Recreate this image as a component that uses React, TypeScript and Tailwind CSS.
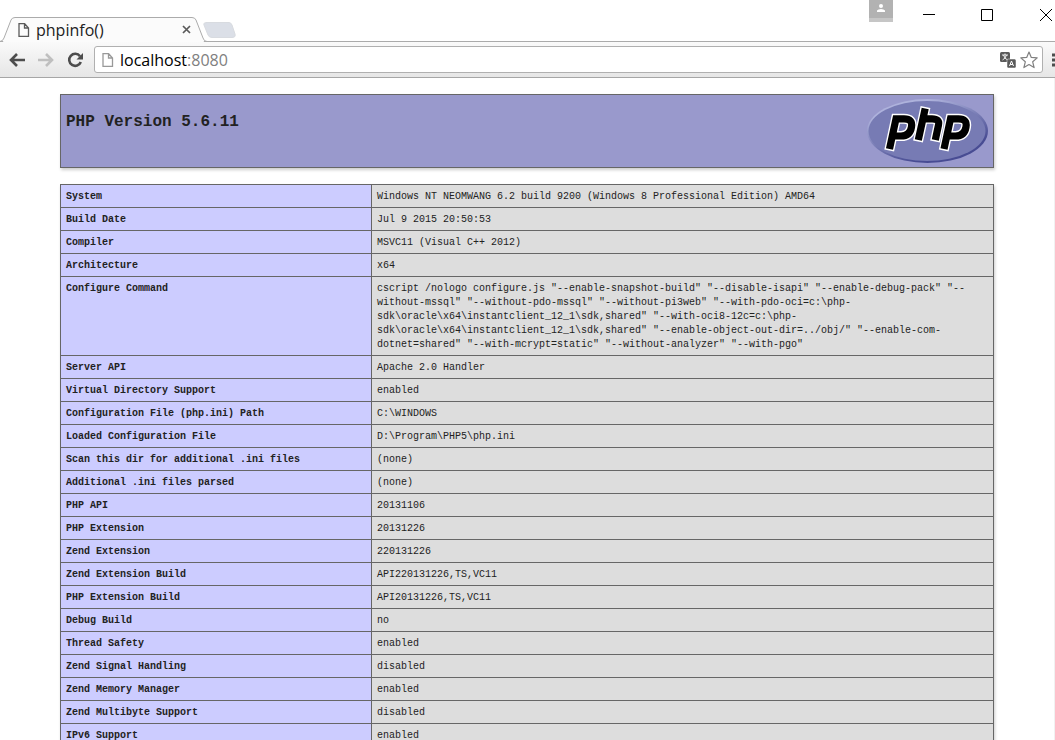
import type { ReactNode } from 'react';

const rows: [string, ReactNode][] = [
  ['System', 'Windows NT NEOMWANG 6.2 build 9200 (Windows 8 Professional Edition) AMD64'],
  ['Build Date', 'Jul 9 2015 20:50:53'],
  ['Compiler', 'MSVC11 (Visual C++ 2012)'],
  ['Architecture', 'x64'],
  [
    'Configure Command',
    <>
      cscript /nologo configure.js "--enable-snapshot-build" "--disable-isapi" "--enable-debug-pack" "--<br />
      without-mssql" "--without-pdo-mssql" "--without-pi3web" "--with-pdo-oci=c:\php-<br />
      sdk\oracle\x64\instantclient_12_1\sdk,shared" "--with-oci8-12c=c:\php-<br />
      sdk\oracle\x64\instantclient_12_1\sdk,shared" "--enable-object-out-dir=../obj/" "--enable-com-<br />
      dotnet=shared" "--with-mcrypt=static" "--without-analyzer" "--with-pgo"
    </>,
  ],
  ['Server API', 'Apache 2.0 Handler'],
  ['Virtual Directory Support', 'enabled'],
  ['Configuration File (php.ini) Path', 'C:\\WINDOWS'],
  ['Loaded Configuration File', 'D:\\Program\\PHP5\\php.ini'],
  ['Scan this dir for additional .ini files', '(none)'],
  ['Additional .ini files parsed', '(none)'],
  ['PHP API', '20131106'],
  ['PHP Extension', '20131226'],
  ['Zend Extension', '220131226'],
  ['Zend Extension Build', 'API220131226,TS,VC11'],
  ['PHP Extension Build', 'API20131226,TS,VC11'],
  ['Debug Build', 'no'],
  ['Thread Safety', 'enabled'],
  ['Zend Signal Handling', 'disabled'],
  ['Zend Memory Manager', 'enabled'],
  ['Zend Multibyte Support', 'disabled'],
  ['IPv6 Support', 'enabled'],
];

function PageIcon({ className }: { className: string }) {
  return (
    <svg viewBox="0 0 12 14" className={`h-[14px] w-3 shrink-0 ${className}`} fill="none" stroke="currentColor">
      <path d="M1 .5h5.5L10.5 5v8.5H1z M6.5.5V5h4" strokeWidth="1.3" />
    </svg>
  );
}

function PhpLogo() {
  return (
    <svg viewBox="0 0 122 70" className="h-[70px] w-[122px] shrink-0" role="img" aria-label="PHP logo">
      <defs>
        <linearGradient id="rim" x1="0.2" y1="0" x2="0.8" y2="1">
          <stop offset="0.15" stopColor="#aeb2dc" />
          <stop offset="0.5" stopColor="#777bb4" />
          <stop offset="0.8" stopColor="#484c93" />
        </linearGradient>
      </defs>
      <ellipse cx="60.5" cy="36" rx="60.5" ry="32" fill="url(#rim)" />
      <ellipse cx="60" cy="36" rx="58.5" ry="30" fill="#777bb4" />
      <g fill="none">
        <g stroke="#fff" strokeWidth="10">
          <path d="M22.2 55.5 L29 23.8 H37 Q46 23.8 44.5 32 Q43 41 34 41 H26" />
          <path d="M51 46.5 L58.5 12 M56 23.8 H65 Q73 23.8 71.500 30 L68 46.5" />
          <path d="M76.7 55.5 L83.5 23.8 H91.5 Q100.500 23.8 99 32 Q97.500 41 88.500 41 H80" />
        </g>
        <g stroke="#000" strokeWidth="7.2">
          <path d="M22.5 54 L29 23.8 H37 Q46 23.8 44.5 32 Q43 41 34 41 H26" />
          <path d="M51.3 45 L58.200 13.5 M56 23.8 H65 Q73 23.8 71.500 30 L68.300 45" />
          <path d="M77 54 L83.5 23.8 H91.5 Q100.500 23.8 99 32 Q97.500 41 88.500 41 H80" />
        </g>
      </g>
    </svg>
  );
}

function TabStrip() {
  return (
    <div className="relative flex h-[42px] shrink-0 items-end justify-between border-b border-[#ababab] bg-white">
      <div className="relative -mb-px flex h-[25px] w-[240px] items-center pl-[18px]">
        <svg viewBox="0 0 240 25" className="absolute inset-0 h-[25px] w-[240px]">
          <path d="M3 25L11 3Q12 .5 15 .5H192Q195 .5 196 3L204 25z" fill="#fbfbfb" />
          <path d="M0 24.5Q3 24 4 21L11 3Q12 .5 15 .5H192Q195 .5 196 3L203 21Q204 24.5 207 24.5" fill="none" stroke="#ababab" />
          <path d="M207 5.5H229Q231 5.5 232 8L235 17Q236 20.5 232 20.5H212Q209 20.5 208 18L204 8Q203 5.5 207 5.5" fill="#dbdfe7" stroke="#d8dbe0" />
        </svg>
        <PageIcon className="relative text-[#5a5a5a]" />
        <span className="relative ml-1.5 w-[146px] font-['Open_Sans',sans-serif] text-base leading-5 text-[#222]">phpinfo()</span>
        <button aria-label="Close tab" className="relative flex size-[9px] text-[#5a5a5a]">
          <svg viewBox="0 0 9 9" className="size-[9px]" stroke="currentColor" strokeWidth="1.7">
            <path d="M1 1l7 7M8 1L1 8" />
          </svg>
        </button>
      </div>
      <div className="flex h-[41px] shrink-0 items-start">
        <button aria-label="Profile" className="mr-[30px] flex h-[22px] w-6 justify-center border-b-4 border-[#c6c6c6] bg-[#b2b2b2] pt-1">
          <svg viewBox="0 0 8 8" className="size-2" fill="#fff">
            <circle cx="4" cy="2" r="2" />
            <path d="M0 8V6.5Q1 5 4 5T8 6.5V8z" />
          </svg>
        </button>
        <button aria-label="Minimize" className="mt-[9px] mr-[46px] flex size-3">
          <svg viewBox="0 0 12 12" className="size-3" stroke="#000"><path d="M0 5.5h12" /></svg>
        </button>
        <button aria-label="Maximize" className="mt-[9px] mr-[47px] flex size-3">
          <svg viewBox="0 0 12 12" className="size-3" stroke="#000" fill="none"><path d="M.5.5h11v11H.5z" /></svg>
        </button>
        <button aria-label="Close" className="mt-[9px] mr-[3px] flex size-3">
          <svg viewBox="0 0 12 12" className="size-3" stroke="#000" fill="none"><path d="M0 0l12 12M12 0L0 12" /></svg>
        </button>
      </div>
    </div>
  );
}

function Toolbar() {
  return (
    <div className="flex h-9 shrink-0 items-center border-b border-[#a6a6a6] bg-linear-to-b from-[#fafafa] to-[#e6e6e6] pl-[9px]">
      <button aria-label="Back" className="mr-[13px] text-[#4d4d4d]">
        <svg viewBox="0 0 16 14" className="h-[14px] w-4" fill="none" stroke="currentColor" strokeWidth="2.6">
          <path d="M16 7H2.5M8 1L2 7l6 6" />
        </svg>
      </button>
      <button aria-label="Forward" className="mr-[13px] text-[#bfbfbf]">
        <svg viewBox="0 0 16 14" className="h-[14px] w-4" fill="none" stroke="currentColor" strokeWidth="2.6">
          <path d="M0 7h13.5M8 1l6 6-6 6" />
        </svg>
      </button>
      <button aria-label="Reload" className="mr-[11px] text-[#4d4d4d]">
        <svg viewBox="0 0 16 16" className="size-4" fill="none">
          <path d="M13 4.2A6 6 0 1 0 13.8 10" stroke="currentColor" strokeWidth="2.6" />
          <path d="M16 1v6.5H9.5z" fill="currentColor" />
        </svg>
      </button>
      <div className="flex h-[27px] min-w-0 flex-1 items-center rounded-[3px] border border-[#b0b0b0] bg-white pr-1 pl-[7px]">
        <PageIcon className="text-[#999]" />
        <div className="ml-1.5 flex-1 font-['Open_Sans',sans-serif] text-base leading-5 text-black">
          localhost<span className="text-[#808080]">:8080</span>
        </div>
        <button aria-label="Translate" className="mr-1">
          <svg viewBox="0 0 16 16" className="size-4">
            <rect width="10" height="10" rx="1.5" fill="#5a5a5a" />
            <path d="M2 3h6M5 1.5V3M2.5 8q3-1.500 4-5M3.5 3q1 3.500 4 5" stroke="#fff" fill="none" strokeWidth=".9" />
            <rect x="7" y="7" width="9" height="9" rx="1.5" fill="#5a5a5a" stroke="#fff" strokeWidth=".5" />
            <path d="M9.5 14l2-5 2 5M10.2 12.500h2.6" stroke="#fff" fill="none" strokeWidth="1" />
          </svg>
        </button>
        <button aria-label="Bookmark">
          <svg viewBox="0 0 18 18" className="size-[18px]" fill="#fff" stroke="#808080" strokeWidth="1.2" strokeLinejoin="round">
            <path d="M9 1l2.3 5.4 5.9.5-4.500 3.900 1.400 5.800L9 13.500l-5.100 3.100 1.400-5.800L.8 6.900l5.900-.5z" />
          </svg>
        </button>
      </div>
      <button aria-label="Menu" className="ml-[9px]">
        <svg viewBox="0 0 3 14" className="h-[14px] w-[3px]" fill="#4d4d4d">
          <path d="M0 .5h3v3H0zM0 5.5h3v3H0zM0 10.5h3v3H0z" />
        </svg>
      </button>
    </div>
  );
}

export default function App() {
  return (
    <div className="flex h-screen flex-col overflow-hidden bg-white">
      <TabStrip />
      <Toolbar />
      <main className="min-h-0 flex-1 overflow-hidden border-r border-[#f1f1f1] px-[60px] pt-4 font-['Liberation_Mono',monospace] text-[#222]">
        <header className="flex h-[74px] justify-between border border-[#666] bg-[#9999cc] pr-1 pl-[5px] shadow-[1px_2px_3px_#ccc]">
          <h1 className="pt-[17px] text-base leading-5 font-bold">PHP Version 5.6.11</h1>
          <PhpLogo />
        </header>
        <table className="mt-4 w-full table-fixed border-collapse text-[10px] leading-[14px] shadow-[1px_2px_3px_#ccc]">
          <tbody>
            {rows.map(([name, value]) => (
              <tr key={name}>
                <th scope="row" className="w-1/3 border border-[#666] bg-[#ccccff] px-[5px] pt-[5px] pb-[3px] text-left align-top font-bold">
                  {name}
                </th>
                <td className="border border-[#666] bg-[#dddddd] px-[5px] pt-[5px] pb-[3px] align-top">{value}</td>
              </tr>
            ))}
          </tbody>
        </table>
      </main>
    </div>
  );
}
